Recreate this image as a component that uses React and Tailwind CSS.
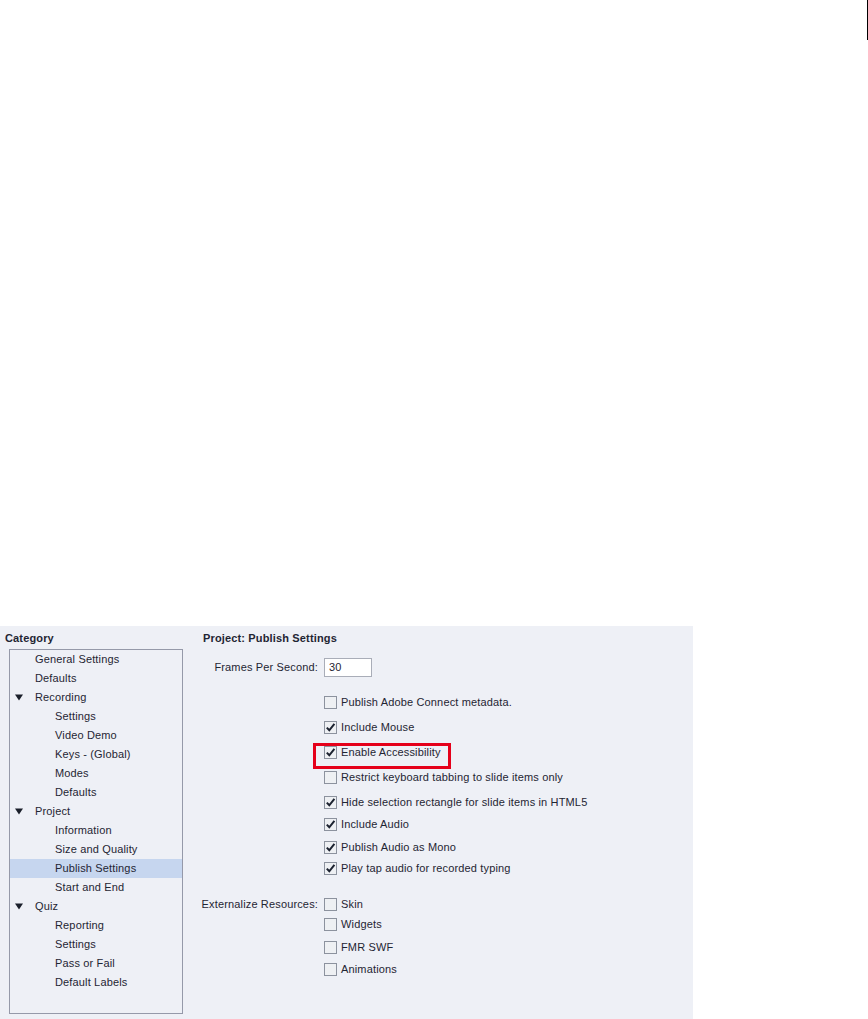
const tree = [
  { label: "General Settings", level: 1 },
  { label: "Defaults", level: 1 },
  { label: "Recording", level: 0 },
  { label: "Settings", level: 2 },
  { label: "Video Demo", level: 2 },
  { label: "Keys - (Global)", level: 2 },
  { label: "Modes", level: 2 },
  { label: "Defaults", level: 2 },
  { label: "Project", level: 0 },
  { label: "Information", level: 2 },
  { label: "Size and Quality", level: 2 },
  { label: "Publish Settings", level: 2, selected: true },
  { label: "Start and End", level: 2 },
  { label: "Quiz", level: 0 },
  { label: "Reporting", level: 2 },
  { label: "Settings", level: 2 },
  { label: "Pass or Fail", level: 2 },
  { label: "Default Labels", level: 2 },
];

const options = [
  { label: "Publish Adobe Connect metadata.", checked: false, mt: "mt-[15px]" },
  { label: "Include Mouse", checked: true, mt: "mt-[5px]" },
  { label: "Enable Accessibility", checked: true, mt: "mt-[5px]", marked: true },
  { label: "Restrict keyboard tabbing to slide items only", checked: false, mt: "mt-[5px]" },
  { label: "Hide selection rectangle for slide items in HTML5", checked: true, mt: "mt-[5px]" },
  { label: "Include Audio", checked: true, mt: "mt-[2px]" },
  { label: "Publish Audio as Mono", checked: true, mt: "mt-[3px]" },
  { label: "Play tap audio for recorded typing", checked: true, mt: "mt-[1px]" },
];

const resources = [
  { label: "Widgets", mt: "mt-0" },
  { label: "FMR SWF", mt: "mt-[3px]" },
  { label: "Animations", mt: "mt-[2px]" },
];

const Arrow = () => (
  <svg width="8" height="7" viewBox="0 0 8 7" className="absolute left-[5px] top-[6px]">
    <path d="M0 0.5 H8 L4 6.5 Z" fill="#1a1f2a" />
  </svg>
);

const Checkbox = ({ checked }) => (
  <span className="flex items-center justify-center w-[13px] h-[13px] border border-[#8c929e] bg-[#eef0f3] shrink-0">
    {checked && (
      <svg width="11" height="11" viewBox="0 0 11 11">
        <path d="M1.8 5.6 L4.3 8.3 L9.4 1.8" fill="none" stroke="#1c2230" strokeWidth="2" />
      </svg>
    )}
  </span>
);

const OptionRow = ({ label, checked, mt, marked }) => (
  <div className={`${mt} flex items-center h-5`}>
    <div className="w-[121px] shrink-0" />
    <div className="relative flex items-center gap-[4px] whitespace-nowrap">
      {marked && (
        <span className="absolute -left-[11px] -top-[3px] w-[138px] h-[26px] border-[3px] border-[#e5001a]" />
      )}
      <Checkbox checked={checked} />
      <span>{label}</span>
    </div>
  </div>
);

export default function App() {
  return (
    <div
      className="w-[868px] h-[1019px] bg-white overflow-hidden text-[11px] leading-[13px] tracking-[0.15px] text-[#1f2533]"
      style={{ fontFamily: '"Liberation Sans", Arial, sans-serif' }}
    >
      <div className="h-[626px] flex justify-end">
        <div className="w-px h-10 bg-black" />
      </div>

      <div className="w-[693px] h-[393px] bg-[#eef0f6] flex">
        {/* category tree */}
        <div className="w-[203px] shrink-0">
          <div className="pt-[6px] pl-[5px] font-bold">Category</div>
          <div className="ml-[9px] mt-[4px] w-[174px] h-[365px] border border-[#9599a9]">
            {tree.map((item, i) => (
              <div
                key={i}
                className={`relative h-[19px] flex items-center ${
                  item.level === 2 ? "pl-[45px]" : "pl-[25px]"
                } ${item.selected ? "bg-[#c6d6ef]" : ""}`}
              >
                {item.level === 0 && <Arrow />}
                {item.label}
              </div>
            ))}
          </div>
        </div>

        {/* settings panel */}
        <div className="flex-1">
          <div className="pt-[6px] font-bold">Project: Publish Settings</div>

          <div className="mt-[13px] flex items-center h-[19px]">
            <div className="w-[115px] shrink-0 text-right whitespace-nowrap">Frames Per Second:</div>
            <div className="ml-[6px] w-[48px] h-[19px] bg-white border border-[#a9adb8] flex items-center pl-[4px]">
              30
            </div>
          </div>

          {options.map((o, i) => (
            <OptionRow key={i} {...o} />
          ))}

          <div className="mt-[16px] flex items-center h-5">
            <div className="w-[115px] shrink-0 flex justify-end whitespace-nowrap">
              <span>Externalize Resources:</span>
            </div>
            <div className="ml-[6px] flex items-center gap-[4px]">
              <Checkbox checked={false} />
              <span>Skin</span>
            </div>
          </div>
          {resources.map((r, i) => (
            <OptionRow key={i} label={r.label} checked={false} mt={r.mt} />
          ))}
        </div>
      </div>
    </div>
  );
}
